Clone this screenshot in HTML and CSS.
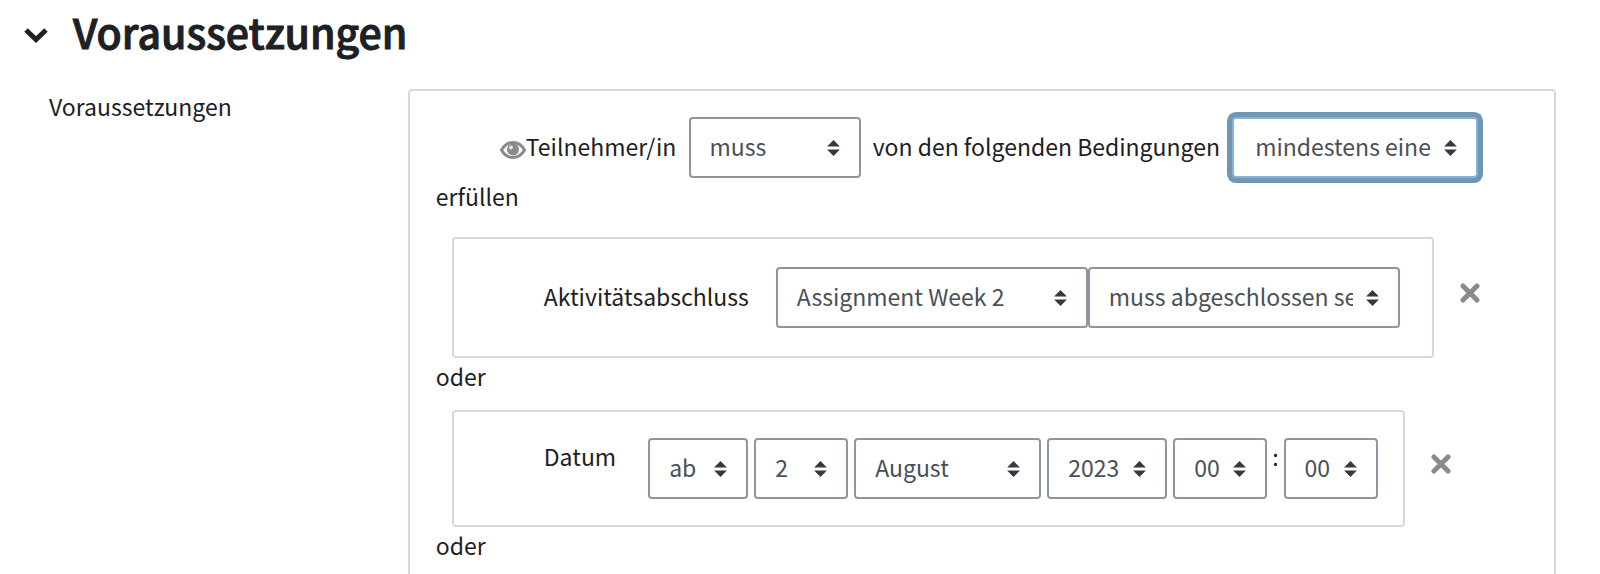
FILE: index.html
```html
<!DOCTYPE html>
<html lang="de">
<head>
    <meta charset="UTF-8">
    <meta name="viewport" content="width=device-width, initial-scale=1.0">
    <title>Voraussetzungen</title>
    <link rel="stylesheet" href="styles.css">
</head>
<body>
    <form class="settings">
        <div class="section-header">
            <button type="button" class="toggle" aria-expanded="true" aria-controls="restrictions" aria-label="Einklappen">
                <svg class="chevron" viewBox="0 0 24 16" aria-hidden="true">
                    <path d="M2 3l10 9.500L22 3" fill="none" stroke="currentColor" stroke-width="5"/>
                </svg>
            </button>
            <h3 class="section-title">Voraussetzungen</h3>
        </div>

        <div class="field" id="restrictions">
            <div class="field-label">Voraussetzungen</div>

            <div class="panel">
                <div class="rule">
                    <button type="button" class="eye" aria-label="Sichtbar">
                        <svg class="eye-icon" viewBox="0 0 26 18" aria-hidden="true">
                            <path d="M1.500 9C4 4.500 8 1.500 13 1.500S22 4.500 24.500 9C22 13.500 18 16.500 13 16.500S4 13.500 1.500 9z" fill="#fff" stroke="#8a8a8a" stroke-width="3"/>
                            <circle cx="13" cy="8.500" r="6" fill="#8a8a8a"/>
                            <circle cx="11" cy="6.500" r="2" fill="#e4e4e4"/>
                        </svg>
                    </button><label for="must">Teilnehmer/in</label>
                    <select class="select select-must" id="must">
                        <option>muss</option>
                        <option>darf nicht</option>
                    </select>
                    <label for="operator">von den folgenden Bedingungen</label>
                    <select class="select select-focus" id="operator">
                        <option>alle</option>
                        <option selected>mindestens eine</option>
                    </select>
                    erfüllen
                </div>

                <div class="item">
                    <div class="condition condition-activity">
                        <label for="activity">Aktivitätsabschluss</label>
                        <div class="selects">
                            <select class="select select-wide" id="activity">
                                <option>Assignment Week 2</option>
                            </select>
                            <select class="select select-wide" aria-label="Status">
                                <option>muss abgeschlossen sein</option>
                            </select>
                        </div>
                    </div>
                    <button type="button" class="remove" aria-label="Löschen">
                        <svg class="cross" viewBox="0 0 20 20" aria-hidden="true">
                            <path d="M3 3l14 14M17 3L3 17" stroke="currentColor" stroke-width="5" stroke-linecap="round"/>
                        </svg>
                    </button>
                </div>

                <div class="connector">oder</div>

                <div class="item">
                    <div class="condition condition-date">
                        <label for="direction">Datum</label>
                        <div class="selects selects-date">
                            <select class="select" id="direction">
                                <option>ab</option>
                                <option>bis</option>
                            </select>
                            <select class="select" aria-label="Tag">
                                <option>1</option>
                                <option selected>2</option>
                                <option>31</option>
                            </select>
                            <select class="select" aria-label="Monat">
                                <option selected>August</option>
                                <option>September</option>
                            </select>
                            <select class="select" aria-label="Jahr">
                                <option>2023</option>
                            </select>
                            <div class="time">
                                <select class="select" aria-label="Stunde">
                                    <option>00</option>
                                </select>
                                <span class="colon">:</span>
                                <select class="select" aria-label="Minute">
                                    <option>00</option>
                                </select>
                            </div>
                        </div>
                    </div>
                    <button type="button" class="remove" aria-label="Löschen">
                        <svg class="cross" viewBox="0 0 20 20" aria-hidden="true">
                            <path d="M3 3l14 14M17 3L3 17" stroke="currentColor" stroke-width="5" stroke-linecap="round"/>
                        </svg>
                    </button>
                </div>

                <div class="connector">oder</div>
            </div>
        </div>
    </form>
</body>
</html>
```

FILE: styles.css
```css
* {
    box-sizing: border-box;
}
body {
    margin: 0;
    background: #fff;
    color: #1d2125;
    font-family: "Noto Sans CJK SC", "Open Sans", sans-serif;
    font-size: 23px;
    line-height: 36px;
}
button {
    padding: 0;
    border: none;
    background: none;
    color: inherit;
    cursor: pointer;
}
svg {
    display: block;
}
.settings {
    padding: 5px 44px 0 24px;
}
.section-header {
    display: flex;
    align-items: center;
    gap: 25px;
}
.toggle {
    padding-top: 8px;
}
.chevron {
    width: 24px;
    height: 16px;
}
.section-title {
    margin: 0;
    font-size: 41px;
    line-height: 52px;
    font-weight: 500;
    -webkit-text-stroke: 1px currentColor;
}
.field {
    display: grid;
    grid-template-columns: minmax(0, 5fr) minmax(0, 16fr);
    margin-top: 32px;
    padding-left: 25px;
}
.field-label {
    line-height: 34px;
}
.panel {
    border: 2px solid #d3d9de;
    border-radius: 4px;
    padding: 26px;
}
.rule {
    text-indent: 64px;
    margin-bottom: 23px;
}
.eye {
    display: inline-block;
    vertical-align: middle;
    text-indent: 0;
}
.eye-icon {
    width: 26px;
    height: 18px;
}
.select {
    appearance: none;
    height: 61px;
    padding: 0 45px 3px 19px;
    border: 2px solid #8f959e;
    border-radius: 4px;
    background: #fff url("data:image/svg+xml,%3Csvg xmlns='http://www.w3.org/2000/svg' viewBox='0 0 4 5'%3E%3Cpath fill='%23343a40' d='M2 0L0 2h4zm0 5L0 3h4z'/%3E%3C/svg%3E") no-repeat right 19px center / 13px 16px;
    color: #495057;
    font: inherit;
    text-indent: 0;
}
.rule .select {
    margin: 0 7px;
}
.select-must {
    width: 172px;
}
.select-focus {
    padding-left: 21px;
    border-color: #85b3d1;
    box-shadow: 0 0 0 5px #6f97b3;
    outline: none;
}
.select-wide {
    width: 312px;
}
.item {
    display: flex;
    align-items: center;
    gap: 26px;
    padding-left: 16px;
}
.condition {
    display: flex;
    border: 2px solid #d3d9de;
    border-radius: 4px;
}
.condition-activity {
    align-items: baseline;
    gap: 27px;
    padding: 28px 32px 28px 90px;
}
.condition-date {
    gap: 32px;
    padding: 26px 25px 26px 90px;
}
.selects,
.time {
    display: flex;
}
.selects-date {
    gap: 6px;
}
.time {
    gap: 5px;
}
.remove {
    padding-bottom: 9px;
    color: #8a8a8a;
}
.cross {
    width: 20px;
    height: 20px;
}
.connector {
    margin-bottom: 16px;
}
```
